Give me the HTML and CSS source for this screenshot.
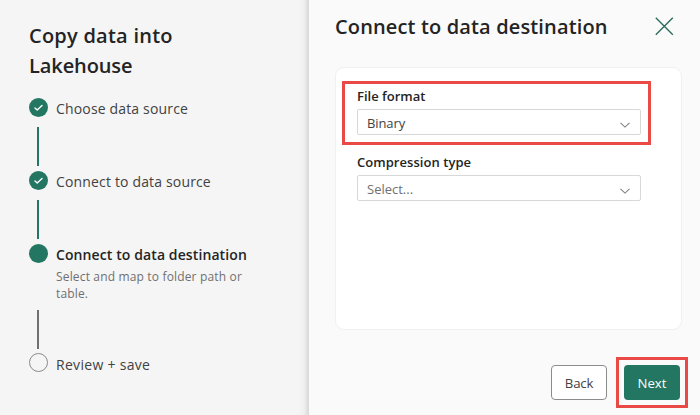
FILE: index.html
```html
<!DOCTYPE html>
<html lang="en">
<head>
<meta charset="utf-8">
<title>Copy data into Lakehouse</title>
<link rel="stylesheet" href="styles.css">
</head>
<body>
<div class="dialog">
  <aside class="sidebar">
    <h1 class="wizard-title"><span class="l1">Copy data into</span><br><span class="l2">Lakehouse</span></h1>
    <ol class="steps">
      <li class="step done">
        <div class="rail"><span class="dot"><svg width="19" height="19" viewBox="0 0 19 19"><path d="M6 9.9 8.2 11.9 13 7.4"/></svg></span><span class="line"></span></div>
        <div class="text"><span class="name">Choose data source</span></div>
      </li>
      <li class="step done">
        <div class="rail"><span class="dot"><svg width="19" height="19" viewBox="0 0 19 19"><path d="M6 9.9 8.2 11.9 13 7.4"/></svg></span><span class="line"></span></div>
        <div class="text"><span class="name">Connect to data source</span></div>
      </li>
      <li class="step current">
        <div class="rail"><span class="dot"></span><span class="line"></span></div>
        <div class="text"><span class="name">Connect to data destination</span><p class="hint">Select and map to folder path or<br>table.</p></div>
      </li>
      <li class="step pending">
        <div class="rail"><span class="dot"></span></div>
        <div class="text"><span class="name">Review + save</span></div>
      </li>
    </ol>
  </aside>
  <main class="panel">
    <header class="panel-header">
      <h2 class="panel-title">Connect to data destination</h2>
      <button class="close" aria-label="Close"><svg width="20" height="20" viewBox="0 0 20 20"><path d="M1.8 1.8 18.8 18.8M18.8 1.8 1.8 18.8"/></svg></button>
    </header>
    <section class="card">
      <div class="field marked">
        <label class="label f1">File format</label>
        <div class="select"><span>Binary</span><svg width="12" height="8" viewBox="0 0 12 8"><path d="M1.5 1.8 6 6.1 10.5 1.8"/></svg></div>
      </div>
      <div class="field">
        <label class="label f2">Compression type</label>
        <div class="select empty"><span>Select...</span><svg width="12" height="8" viewBox="0 0 12 8"><path d="M1.5 1.8 6 6.1 10.5 1.8"/></svg></div>
      </div>
    </section>
    <footer class="actions">
      <button class="btn back"><span>Back</span></button>
      <div class="next-mark"><button class="btn next"><span>Next</span></button></div>
    </footer>
  </main>
</div>
</body>
</html>
```
FILE: styles.css
```css
* { box-sizing: border-box; }
body {
  margin: 0;
  font-family: "Open Sans", "Noto Sans", sans-serif;
  color: #242424;
  background: #f5f5f5;
}
h1, h2, p, ol { margin: 0; padding: 0; }
button { font: inherit; padding: 0; border: 0; background: none; }
.dialog { display: flex; width: 700px; height: 415px; overflow: hidden; }

.sidebar {
  width: 309px;
  padding: 21px 0 0 28px;
  background: linear-gradient(to right, #f5f5f5 297px, #f1f1f1 303px, #e8e8e8 306px, #dedede 307px, #dcdcdc 309px);
}
.wizard-title {
  height: 60px;
  padding-left: 1px;
  font-size: 20px;
  font-weight: 600;
  line-height: 30px;
  white-space: nowrap;
}
.l1 { letter-spacing: 0.24px; }
.l2 { letter-spacing: -0.1px; }

.steps { list-style: none; margin-top: 17px; }
.step { display: flex; height: 73px; }
.step.current { height: 109px; }
.rail { display: flex; flex-direction: column; align-items: center; width: 20px; }
.dot { width: 19px; height: 19px; border-radius: 50%; background: #237762; }
.dot svg { display: block; fill: none; stroke: #fff; stroke-width: 1.4; stroke-linecap: round; stroke-linejoin: round; }
.line { width: 2px; height: 39px; margin-top: 10px; background: #237762; }
.current .line { margin-top: 47px; background: #707070; }
.pending .dot { background: transparent; border: 1px solid #8a8a8a; }
.text { padding: 1px 0 0 8px; white-space: nowrap; }
.name { display: block; font-size: 14px; line-height: 20px; letter-spacing: 0.16px; color: #424242; }
.current .name { font-weight: 600; letter-spacing: 0.1px; color: #242424; }
.pending .name { padding-top: 1px; letter-spacing: 0.3px; }
.hint { margin-top: 3px; font-size: 12px; line-height: 17px; letter-spacing: 0.16px; color: #707070; }

.panel { width: 391px; padding: 0 18px 0 26px; background: #fafafa; }
.panel-header { display: flex; justify-content: space-between; height: 67px; padding: 12px 8px 0 0; }
.panel-title { font-size: 20px; font-weight: 600; line-height: 30px; letter-spacing: 0.14px; white-space: nowrap; }
.close { width: 20px; height: 20px; margin-top: 4px; }
.close svg { display: block; fill: none; stroke: #2b685c; stroke-width: 1.3; }

.card {
  height: 263px;
  width: 347px;
  padding: 13px 0 0 6px;
  border: 1px solid #f0f0f0;
  border-radius: 9px;
  background: #fff;
}
.field { width: 309px; padding: 8px 12px 0; border: 0 solid transparent; border-width: 0 3px; }
.marked { height: 64px; padding-top: 3px; border: 3px solid #e94a46; }
.label { display: block; height: 22px; font-size: 13px; font-weight: 600; line-height: 19px; white-space: nowrap; }
.f2 { letter-spacing: 0.05px; }
.select {
  display: flex;
  align-items: center;
  justify-content: space-between;
  width: 284px;
  height: 26px;
  padding: 1px 9px 0 9px;
  border: 1px solid #d8d8d8;
  border-radius: 2px;
  font-size: 13px;
  color: #424242;
}
.marked .select { letter-spacing: -0.1px; }
.select.empty { color: #707070; }
.select svg { margin-top: 4px; fill: none; stroke: #808080; stroke-width: 1.1; }

.actions { display: flex; justify-content: flex-end; padding-top: 27px; margin-right: -6px; }
.btn { display: flex; align-items: center; justify-content: center; width: 56px; height: 35px; border-radius: 4px; font-size: 13.2px; }
.back { margin: 8px 9px 0 0; border: 1px solid #8c8c8c; background: #fff; color: #424242; letter-spacing: -0.2px; }
.next-mark { width: 72px; height: 51px; padding: 5px; border: 3px solid #e94a46; }
.next { background: #237762; color: #fff; }
```
